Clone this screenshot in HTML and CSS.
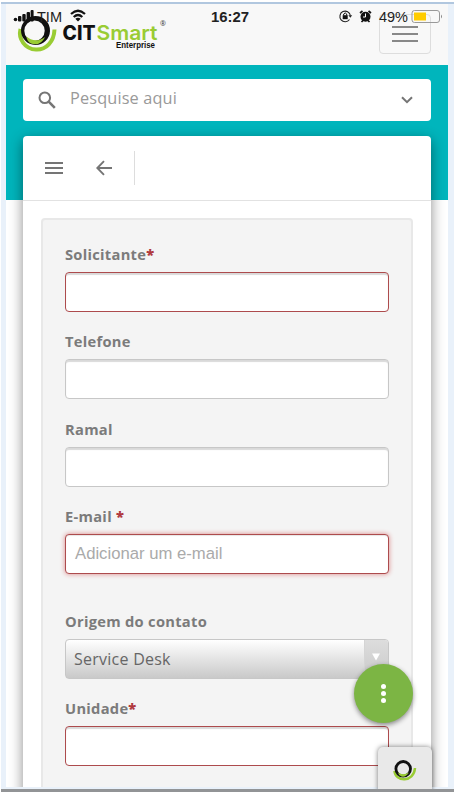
FILE: index.html
```html
<!DOCTYPE html>
<html lang="pt-BR">
<head>
<meta charset="utf-8">
<title>CITSmart Enterprise</title>
<link rel="stylesheet" href="styles.css">
</head>
<body>
<div class="frame">
  <div class="app">
    <header class="topbar">
      <svg class="logo" width="154" height="42" viewBox="0 0 154 42">
        <path d="M2.5 11C0 21 7 31 18 31.5C28 32 36 24 36.5 11.5" fill="none" stroke="#9c3" stroke-width="4"/>
        <path fill-rule="evenodd" d="M17.5 -2A14.5 14.5 0 1 0 32 13A14.5 14.5 0 0 0 17.5 -2ZM16.500 2.500A10.200 10.200 0 1 1 6.300 12.700A10.200 10.200 0 0 1 16.500 2.500Z" fill="#111"/>
        <path d="M8.5 18.5C13 23 21 24 27 19C24 26 18 27.5 13 25.5C10 24 8.5 21 8.5 18.5Z" fill="#9c3"/>
        <text class="logo-name" x="44.500" y="21.500" textLength="33" lengthAdjust="spacingAndGlyphs">CIT</text>
        <text class="logo-smart" x="78.500" y="21.500" textLength="61" lengthAdjust="spacingAndGlyphs">Smart</text>
        <text class="logo-sub" x="98" y="30" textLength="39" lengthAdjust="spacingAndGlyphs">Enterprise</text>
        <text class="logo-reg" x="142" y="8">®</text>
      </svg>
      <button class="toggle" aria-label="Menu"><i></i><i></i><i></i></button>
    </header>
    <div class="status">
      <svg width="430" height="24" viewBox="0 0 430 24">
        <g fill="#111"><circle cx="2.5" cy="13.5" r="1.8"/><rect x="5" y="10" width="3.4" height="5.5" rx="1"/><rect x="9.3" y="8" width="3.4" height="7.5" rx="1"/><rect x="13.6" y="6" width="3.4" height="9.5" rx="1"/><rect x="17.6" y="4" width="3" height="11.5" rx="1"/></g>
        <text x="24" y="15.500" textLength="25" lengthAdjust="spacingAndGlyphs">TIM</text>
        <path d="M58 8Q65 1.500 72 8M60.700 11Q65 7 69.300 11" fill="none" stroke="#111" stroke-width="2.200"/>
        <path d="M65 15.500L62.300 12.800Q65 10.600 67.700 12.800Z" fill="#111"/>
        <text class="clock" x="198" y="15.500" textLength="38" lengthAdjust="spacingAndGlyphs">16:27</text>
        <path d="M336.500 13.500A5.300 5.300 0 1 1 337.400 9.500" fill="none" stroke="#222" stroke-width="1.100"/>
        <path d="M335.400 9.200H339.200L337.300 11.800Z" fill="#222"/>
        <rect x="329.700" y="9.200" width="5" height="4" fill="#111"/><path d="M330.700 9.500V8Q332.200 5.800 333.700 8V9.500" fill="none" stroke="#111"/>
        <circle cx="352.500" cy="10.700" r="5" fill="#111"/><path d="M347 7L349.500 5M358 7L355.500 5M348.500 16L350 14.500M356.500 16L355 14.500" stroke="#111" stroke-width="1.700"/><path d="M352.500 7.500V11H350" fill="none" stroke="#fff"/>
        <text x="366" y="15.500" textLength="29" lengthAdjust="spacingAndGlyphs">49%</text>
        <rect x="399" y="4.500" width="27.500" height="12" rx="2.500" fill="none" stroke="#999"/>
        <rect x="401" y="6.500" width="12" height="8" fill="#fc0"/><path d="M428 8.500Q430 10.500 428 12.500Z" fill="#888"/>
      </svg>
    </div>
    <main class="main">
      <div class="search">
        <svg width="18" height="18" viewBox="0 0 18 18"><circle cx="6.8" cy="6.8" r="5.3" fill="none" stroke="#757575" stroke-width="2"/><path d="M10.7 10.7L16.8 16.8" stroke="#757575" stroke-width="2.6"/></svg>
        <span class="query">Pesquise aqui</span>
        <svg width="12" height="8" viewBox="0 0 12 8"><path d="M1 1.2L6 6.2L11 1.2" fill="none" stroke="#757575" stroke-width="2"/></svg>
      </div>
      <section class="card">
        <div class="tools">
          <svg width="18" height="12" viewBox="0 0 18 12"><path d="M0 1H18M0 6H18M0 11H18" stroke="#757575" stroke-width="1.9"/></svg>
          <svg class="back" width="16" height="16" viewBox="0 0 16 16"><path d="M16 8H2M8 1.2L1.3 8L8 14.8" fill="none" stroke="#757575" stroke-width="1.9"/></svg>
          <span class="divider"></span>
        </div>
        <form class="panel">
          <div class="field"><label>Solicitante<b>*</b></label><div class="input required"></div></div>
          <div class="field"><label>Telefone</label><div class="input"></div></div>
          <div class="field"><label>Ramal</label><div class="input"></div></div>
          <div class="field email"><label>E-mail <b>*</b></label><div class="input required focus">Adicionar um e-mail</div></div>
          <div class="field"><label>Origem do contato</label><div class="input select"><span>Service Desk</span><div class="arrow"><svg width="8" height="8" viewBox="0 0 8 8"><path d="M0 0.5H8L4 7.5Z" fill="#fff"/></svg></div></div></div>
          <div class="field"><label>Unidade<b>*</b></label><div class="input required"></div></div>
        </form>
      </section>
    </main>
  </div>
  <div class="fab"><i></i><i></i><i></i></div>
  <div class="chip"><svg width="24" height="22" viewBox="0 0 24 22"><path d="M1.500 11C2 22 21 23 22 8" fill="none" stroke="#9c3" stroke-width="2.500"/><circle cx="10.200" cy="8.800" r="7.300" fill="none" stroke="#111" stroke-width="2.800"/><path d="M5 12.500Q10 16 16 12.500Q13 17.500 8.500 16.500Q5.500 15.500 5 12.500Z" fill="#9c3"/></svg></div>
</div>
</body>
</html>
```
FILE: styles.css
```css
* { box-sizing: border-box; }
body { margin: 0; background: #fff; font-family: "Open Sans", sans-serif; }
.frame {
  position: relative;
  width: 453px;
  height: 792px;
  margin-left: 1px;
  padding: 4px 5px 0;
  overflow: hidden;
  background: #e9f1fa;
  border-top: 2px solid #fff;
  border-bottom: 3px solid #929496;
}
.frame::before { content: ""; position: absolute; top: 0; left: 0; right: 0; height: 2px; background: #b1c7df; }
.app { width: 442px; height: 783px; margin-top: -2px; overflow: hidden; background: #fff; }
.topbar {
  display: flex;
  justify-content: space-between;
  height: 61px;
  padding: 14px 17px 0 12px;
  background: #f8f8f8;
}
.logo { flex: none; overflow: visible; }
.logo-name, .logo-smart { font-family: Inter, sans-serif; font-size: 20px; }
.logo-name { font-weight: 800; fill: #111; }
.logo-smart { font-weight: 600; fill: #9c3; }
.logo-sub { font: bold 8.5px "Liberation Sans", sans-serif; fill: #111; }
.logo-reg { font-size: 7px; fill: #333; }
.toggle {
  display: flex;
  flex-direction: column;
  align-items: center;
  gap: 5px;
  width: 52px;
  height: 40px;
  margin-top: -4px;
  padding: 11px 0 0;
  background: none;
  border: 1px solid #ddd;
  border-radius: 4px;
}
.toggle i { width: 26px; height: 2px; background: #888; }
.status {
  position: absolute;
  top: 4px;
  left: 12px;
  font: 14px "Liberation Sans", sans-serif;
}
.status svg { display: block; }
.status text { fill: #222; }
.status .clock { font-weight: bold; }
.main {
  padding: 14px 17px 0;
  background: linear-gradient(#00b5bc 0 135px, #fff 135px);
}
.search {
  display: flex;
  align-items: center;
  height: 42px;
  padding: 0 18px 0 15px;
  background: #fff;
  border-radius: 4px;
}
.query { flex: 1; margin: -5px 0 0 14px; font-size: 16.3px; letter-spacing: .15px; color: #999; }
.card {
  height: 670px;
  margin-top: 15px;
  background: #fff;
  border-radius: 4px;
  box-shadow: 0 4px 14px rgba(0, 0, 0, .45);
}
.tools {
  display: flex;
  align-items: center;
  height: 65px;
  padding-left: 22px;
  border-bottom: 1px solid #e2e2e2;
}
.back { margin-left: 33px; }
.divider { width: 1px; height: 34px; margin-left: 22px; background: #ddd; }
.panel {
  width: 372px;
  height: 620px;
  margin: 17px 0 0 18px;
  padding: 24px 22px;
  background: #f4f4f4;
  border: 2px solid #e8e8e8;
  border-radius: 4px;
}
.field { height: 87.3px; }
.email { height: 105px; }
label { display: block; height: 28px; font-size: 14.7px; line-height: 21px; letter-spacing: .28px; font-weight: bold; color: #7b7b7b; }
label b { color: #b0393e; }
.input {
  height: 40px;
  padding: 0 9px;
  background: #fff;
  border: 1px solid #c7c7c7;
  border-radius: 4px;
  box-shadow: inset 0 2px 1px rgba(0, 0, 0, .15);
  font: 16.7px/38px "Liberation Sans", sans-serif;
  color: #aaa;
}
.required { border-color: #ad4b4d; }
.focus { box-shadow: inset 0 1px 1px rgba(0, 0, 0, .1), 0 0 5px #dc8585; }
.select {
  display: flex;
  justify-content: space-between;
  padding: 0 0 0 8px;
  overflow: hidden;
  background: linear-gradient(#fff, #c9c9c9);
  box-shadow: none;
  font: 16px/38px "Open Sans", sans-serif;
  letter-spacing: .25px;
  color: #666;
}
.arrow { width: 24px; padding: 13px 0 0 7px; background: linear-gradient(#ddd, #c9c9c9); border-left: 1px solid #d5d5d5; line-height: 0; }
.fab {
  position: absolute;
  top: 662px;
  left: 353px;
  display: flex;
  flex-direction: column;
  align-items: center;
  justify-content: center;
  gap: 2px;
  width: 59px;
  height: 59px;
  border-radius: 50%;
  background: #7cb544;
  box-shadow: 0 2px 5px rgba(0, 0, 0, .45);
}
.fab i { width: 5px; height: 5px; border-radius: 50%; background: #fff; }
.chip {
  position: absolute;
  top: 745px;
  left: 377px;
  width: 54px;
  height: 45px;
  padding: 13px 0 0 15px;
  background: #e9e9e9;
  border-radius: 5px 5px 0 0;
  box-shadow: 0 0 5px rgba(0, 0, 0, .5);
}
```
